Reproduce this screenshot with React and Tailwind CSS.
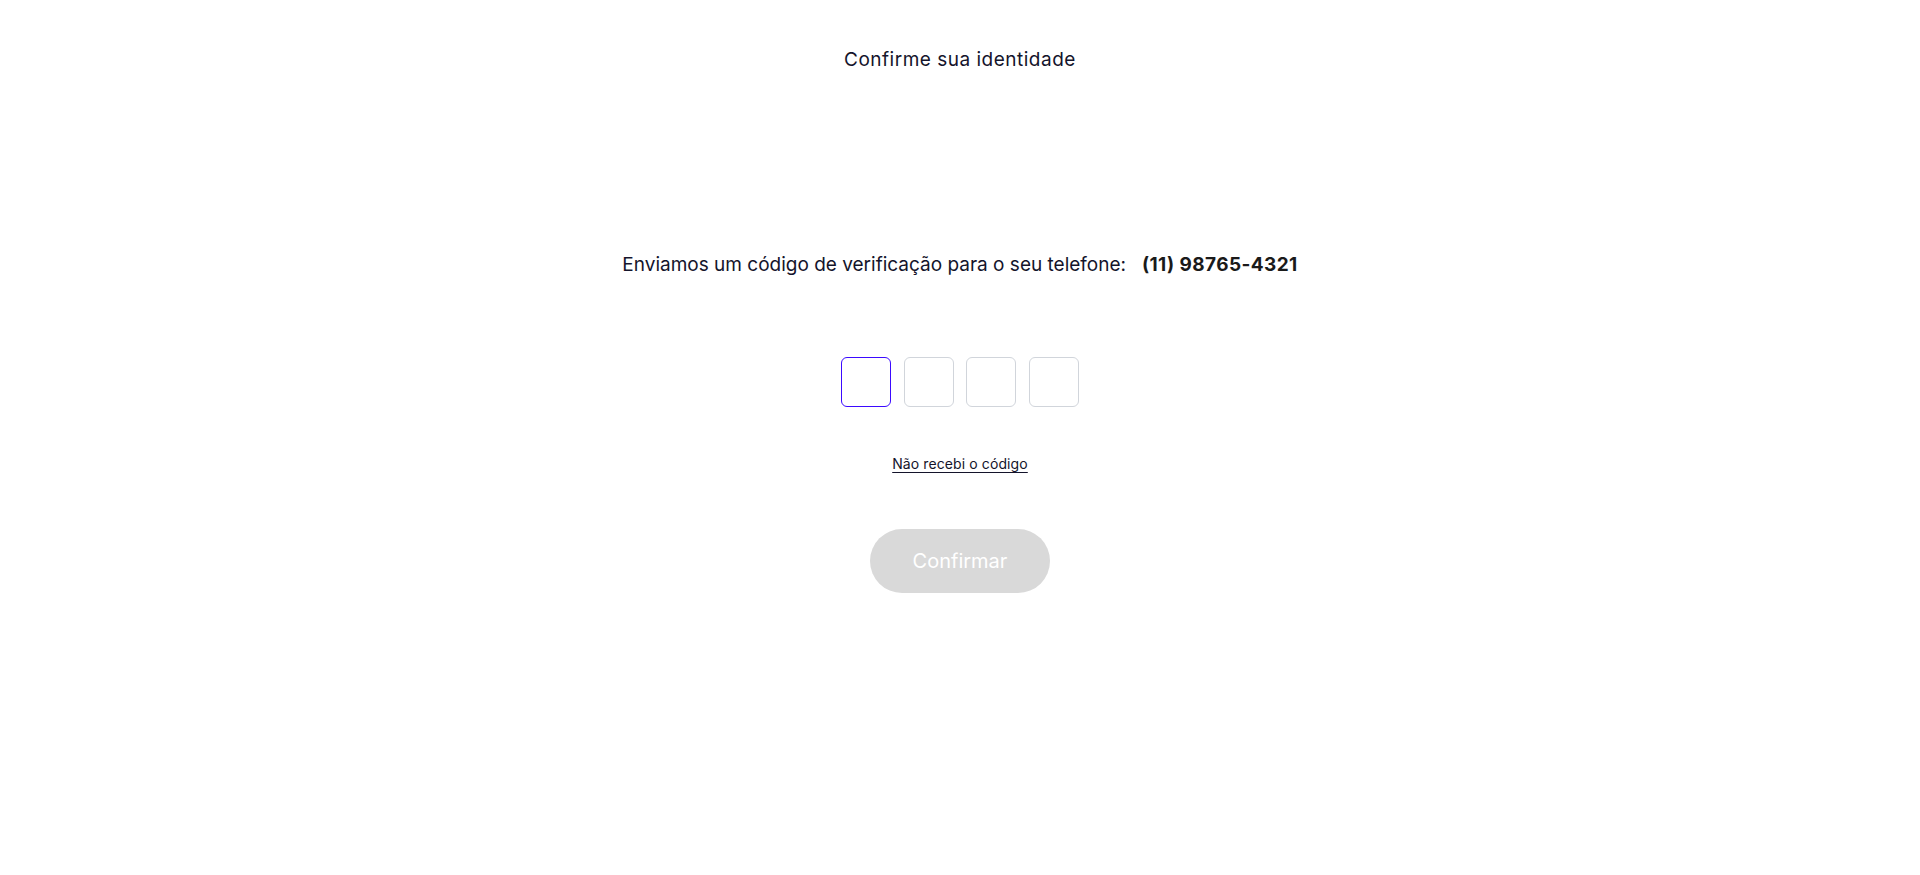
import { useState } from 'react';

const App = () => {
    const [code, setCode] = useState(['', '', '', '']);

    const handleChange = (i, v) => {
        const next = [...code];
        next[i] = v.slice(-1);
        setCode(next);
    }

    const filled = code.every((c) => c !== '');

    return (
        <div className="min-h-[875px] w-full bg-white flex flex-col items-center text-[#14142b]" style={{ fontFamily: 'Inter, "Noto Sans", sans-serif' }}>
            <header className="h-[120px] w-full flex items-center justify-center">
                <h1 className="text-[19px] font-normal tracking-[0.5px]">Confirme sua identidade</h1>
            </header>
            <p className="mt-[133px] text-[19px] leading-[24px] tracking-[0px] flex items-center">
                <span>Enviamos um código de verificação para o seu telefone:</span>
                <span className="ml-[16px] font-bold text-[#1a1a1a] tracking-[0.4px]">(11) 98765-4321</span>
            </p>
            <div className="mt-[80px] flex gap-[12.5px]">
                {code.map((c, i) => (
                    <input
                        key={i}
                        value={c}
                        onChange={(e) => handleChange(i, e.target.value)}
                        className={`w-[50px] h-[50px] rounded-[6px] border text-center text-xl outline-none ${i === 0 ? 'border-[#3b0aff]' : 'border-[#d1d5db]'}`}
                    />
                ))}
            </div>
            <a href="#" className="mt-[48px] text-[14px] leading-[18px] underline underline-offset-[3px] tracking-[0.1px]">Não recebi o código</a>
            <button
                disabled={!filled}
                className="mt-[56px] w-[180px] h-[64px] rounded-full bg-[#d9d9d9] text-white text-[20px]"
            >
                Confirmar
            </button>
        </div>
    )
}

export default App
